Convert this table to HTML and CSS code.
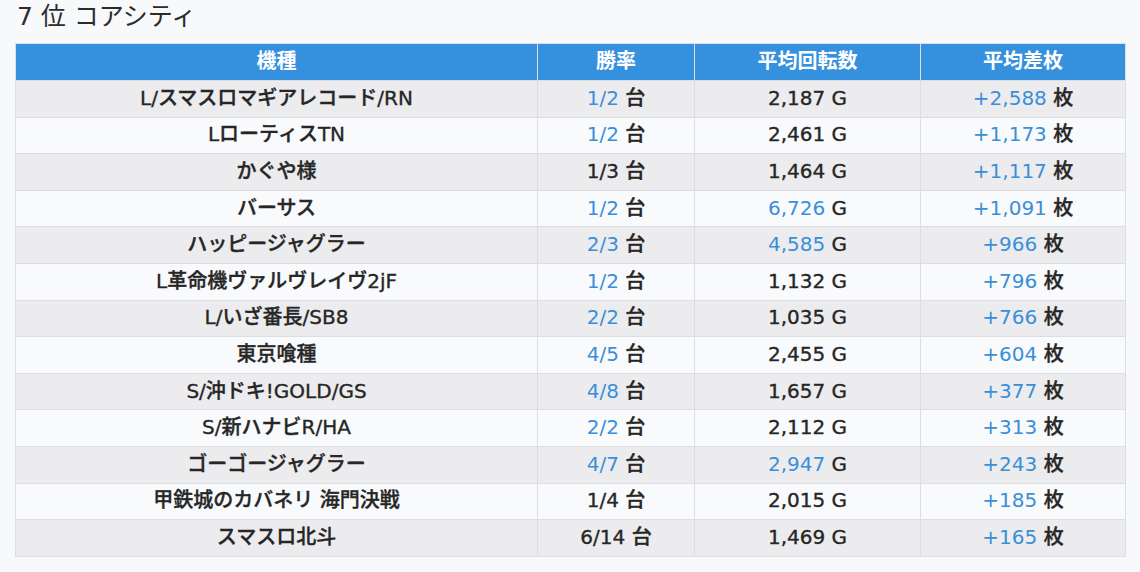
FILE: index.html
```html
<!DOCTYPE html>
<html lang="ja">
<head>
<meta charset="utf-8">
<link rel="stylesheet" href="styles.css">
</head>
<body>
<div class="page">
  <h2 class="title">7 位 コアシティ</h2>
  <table class="rank">
    <colgroup>
      <col class="c1"><col class="c2"><col class="c3"><col class="c4">
    </colgroup>
    <thead>
      <tr><th>機種</th><th>勝率</th><th>平均回転数</th><th>平均差枚</th></tr>
    </thead>
    <tbody>
      <tr><td>L/スマスロマギアレコード/RN</td><td><span class="hl">1/2</span> 台</td><td>2,187 G</td><td><span class="hl">+2,588</span> 枚</td></tr>
      <tr><td>LローティスTN</td><td><span class="hl">1/2</span> 台</td><td>2,461 G</td><td><span class="hl">+1,173</span> 枚</td></tr>
      <tr><td>かぐや様</td><td>1/3 台</td><td>1,464 G</td><td><span class="hl">+1,117</span> 枚</td></tr>
      <tr><td>バーサス</td><td><span class="hl">1/2</span> 台</td><td><span class="hl">6,726</span> G</td><td><span class="hl">+1,091</span> 枚</td></tr>
      <tr><td>ハッピージャグラー</td><td><span class="hl">2/3</span> 台</td><td><span class="hl">4,585</span> G</td><td><span class="hl">+966</span> 枚</td></tr>
      <tr><td>L革命機ヴァルヴレイヴ2jF</td><td><span class="hl">1/2</span> 台</td><td>1,132 G</td><td><span class="hl">+796</span> 枚</td></tr>
      <tr><td>L/いざ番長/SB8</td><td><span class="hl">2/2</span> 台</td><td>1,035 G</td><td><span class="hl">+766</span> 枚</td></tr>
      <tr><td>東京喰種</td><td><span class="hl">4/5</span> 台</td><td>2,455 G</td><td><span class="hl">+604</span> 枚</td></tr>
      <tr><td>S/沖ドキ!GOLD/GS</td><td><span class="hl">4/8</span> 台</td><td>1,657 G</td><td><span class="hl">+377</span> 枚</td></tr>
      <tr><td>S/新ハナビR/HA</td><td><span class="hl">2/2</span> 台</td><td>2,112 G</td><td><span class="hl">+313</span> 枚</td></tr>
      <tr><td>ゴーゴージャグラー</td><td><span class="hl">4/7</span> 台</td><td><span class="hl">2,947</span> G</td><td><span class="hl">+243</span> 枚</td></tr>
      <tr><td>甲鉄城のカバネリ 海門決戦</td><td>1/4 台</td><td>2,015 G</td><td><span class="hl">+185</span> 枚</td></tr>
      <tr><td>スマスロ北斗</td><td>6/14 台</td><td>1,469 G</td><td><span class="hl">+165</span> 枚</td></tr>
    </tbody>
  </table>
</div>
</body>
</html>
```

FILE: styles.css
```css
html, body {
  margin: 0;
  padding: 0;
  background: #f8f9fb;
}
body {
  font-family: "DejaVu Sans", "Noto Sans CJK JP", sans-serif;
  color: #212529;
}
.page {
  padding: 0 15px;
}
.title {
  margin: 0;
  padding: 0 0 0 2px;
  height: 43px;
  font-size: 25px;
  font-weight: 400;
  line-height: 34px;
  color: #2b2b2b;
}
.rank {
  width: 1110px;
  border-collapse: collapse;
  table-layout: fixed;
  font-size: 20px;
  line-height: 24px;
}
.c1 { width: 522px; }
.c2 { width: 157px; }
.c3 { width: 226px; }
.c4 { width: 205px; }
.rank th {
  background: #3590dd;
  color: #fff;
  font-weight: 700;
  height: 33px;
  padding: 0 0 3px;
  border: 1px solid #dcdee2;
  border-bottom: none;
  text-align: center;
}
.rank td {
  height: 33.6px;
  padding: 0 0 2px;
  border: 1px solid #dcdee2;
  text-align: center;
  font-weight: 500;
  color: #262626;
  -webkit-text-stroke: 0.35px #262626;
}
.rank tbody tr:nth-child(odd) td { background: #ececee; }
.rank tbody tr:nth-child(even) td { background: #f9fafc; }
.hl {
  color: #3a8fd9;
  font-weight: 400;
  -webkit-text-stroke: 0;
}
```
